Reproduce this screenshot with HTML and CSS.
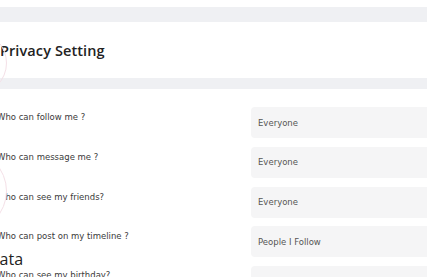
FILE: index.html
```html
<!DOCTYPE html>
<html lang="en">
<head>
    <meta charset="UTF-8">
    <meta name="viewport" content="width=device-width, initial-scale=1.0">
    <title>Privacy Setting</title>
    <link rel="stylesheet" href="styles.css">
</head>
<body>
    <div class="page">
        <div class="band band-top"></div>
        <div class="header">
            <h2 class="title">Privacy Setting</h2>
        </div>
        <div class="band band-mid"></div>

        <div class="rows">
            <div class="row">
                <label class="label">Who can follow me ?</label>
                <div class="select">Everyone</div>
            </div>
            <div class="row">
                <label class="label">Who can message me ?</label>
                <div class="select">Everyone</div>
            </div>
            <div class="row">
                <label class="label">Who can see my friends?</label>
                <div class="select">Everyone</div>
            </div>
            <div class="row">
                <label class="label">Who can post on my timeline ?</label>
                <div class="select">People I Follow</div>
            </div>
            <div class="row">
                <div class="label-group">
                    <h3 class="section">Data</h3>
                    <label class="label">Who can see my birthday?</label>
                </div>
                <div class="select"></div>
            </div>
        </div>

        <!-- decorative circles on the left edge -->
        <div class="ring ring-one"></div>
        <div class="ring ring-two"></div>
    </div>
</body>
</html>
```

FILE: styles.css
```css
body {
    font-family: "Open Sans", "Noto Sans", sans-serif;
    background-color: #fff;
    margin: 0;
    padding: 0;
    overflow: hidden;
}

.page {
    position: relative;
    width: 480px;
    height: 277px;
    margin-left: -3px;
    padding-top: 7px;
}

.band {
    background-color: #eff0f3;
}

.band-top {
    height: 15px;
}

.band-mid {
    height: 11px;
}

.header {
    height: 56px;
    display: flex;
    align-items: center;
    padding-left: 3px;
}

.title {
    margin: 0;
    font-size: 14.5px;
    font-weight: 600;
    color: #222;
    letter-spacing: 0.1px;
}

.rows {
    display: flex;
    flex-direction: column;
    gap: 8.75px;
    padding-top: 18px;
}

.row {
    display: grid;
    grid-template-columns: 254px 1fr;
    height: 31px;
}

.label {
    display: block;
    padding-top: 4px;
    font-family: "DejaVu Sans", sans-serif;
    font-size: 8.5px;
    line-height: 12px;
    color: #3a3a3a;
}

.label-group {
    margin-top: -16px;
}

.label-group .label {
    padding-top: 0;
}

.section {
    margin: 0 0 0 -9px;
    font-size: 16px;
    font-weight: 400;
    line-height: 19px;
    color: #222;
}

.select {
    background-color: #f5f5f6;
    border-radius: 4px;
    display: flex;
    align-items: center;
    padding-left: 7px;
    font-family: "DejaVu Sans", sans-serif;
    font-size: 8.5px;
    color: #555;
}

.ring {
    position: absolute;
    border: 1px solid #f4e0e7;
    border-radius: 50%;
    background-color: #fff;
}

.ring-one {
    width: 62px;
    height: 62px;
    left: -54px;
    top: 31px;
    background-color: transparent;
}

.ring-two {
    width: 80px;
    height: 80px;
    left: -72px;
    top: 150px;
}
```
